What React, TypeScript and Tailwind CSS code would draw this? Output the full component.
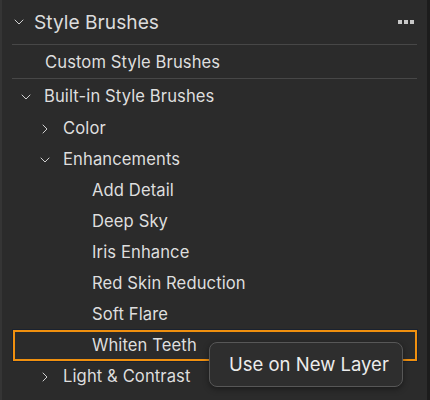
import { ChevronDown, ChevronRight } from 'lucide-react';

const enhancements = ['Add Detail', 'Deep Sky', 'Iris Enhance', 'Red Skin Reduction', 'Soft Flare'];

function Row({ indent, children, chevron }: { indent: string; children: React.ReactNode; chevron?: 'down' | 'right' }) {
  return (
    <div className={`flex items-center h-[31px] ${indent}`}>
      {chevron === 'down' && <ChevronDown className="w-[16px] h-[16px] mr-[10px] text-[#d0d0d0]" strokeWidth={1.5} />}
      {chevron === 'right' && <ChevronRight className="w-[16px] h-[16px] mr-[10px] text-[#d0d0d0]" strokeWidth={1.5} />}
      <span>{children}</span>
    </div>
  );
}

export default function App() {
  return (
    <div
      className="w-[430px] h-[400px] bg-[#2b2b2b] text-[#dedede] overflow-hidden flex"
      style={{ fontFamily: 'Inter, "Noto Sans", sans-serif' }}
    >
      <div className="w-[2px] bg-[#353535]" />
      <div className="flex-1 relative">
        <div className="flex items-center h-[44px] pl-[9px] pr-[13px]">
          <ChevronDown className="w-[16px] h-[16px] text-[#d0d0d0] mr-[7px]" strokeWidth={1.5} />
          <span className="text-[19.2px] text-[#dcdcdc]">Style Brushes</span>
          <div className="ml-auto flex gap-[2px]">
            <span className="w-[4px] h-[4px] bg-[#c8c8c8]" />
            <span className="w-[4px] h-[4px] bg-[#c8c8c8]" />
            <span className="w-[4px] h-[4px] bg-[#c8c8c8]" />
          </div>
        </div>
        <div className="mx-[10px] h-[1px] bg-[#474747]" />
        <div className="flex items-center h-[33px] pt-[2px] pl-[43px] text-[16.6px] tracking-[0.1px]">Custom Style Brushes</div>
        <div className="mx-[10px] h-[1px] bg-[#474747]" />
        <div className="text-[16.6px] tracking-[0.1px] pt-[2px]">
          <Row indent="pl-[16px]" chevron="down">Built-in Style Brushes</Row>
          <div className="h-[1px]" />
          <Row indent="pl-[35px]" chevron="right">Color</Row>
          <Row indent="pl-[35px]" chevron="down">Enhancements</Row>
          {enhancements.map((name) => (
            <Row key={name} indent="pl-[90px]">{name}</Row>
          ))}
          <div className="ml-[11px] mr-[10px] h-[31px] flex items-center pl-[77px] border-2 border-solid border-[#f0900f] shadow-[0_0_0_1px_#1a2230]">
            Whiten Teeth
          </div>
          <Row indent="pl-[35px]" chevron="right">Light &amp; Contrast</Row>
        </div>
        <div className="absolute left-[207px] top-[342px] w-[194px] h-[45px] rounded-[8px] bg-[#2e2e2e] border border-[#575757] flex items-center pl-[19px] text-[18.5px] text-[#ececec] shadow-[0_2px_6px_rgba(0,0,0,0.4)]">
          Use on New Layer
        </div>
      </div>
      <div className="w-[3px] bg-[#1c1c1c]" />
    </div>
  );
}
